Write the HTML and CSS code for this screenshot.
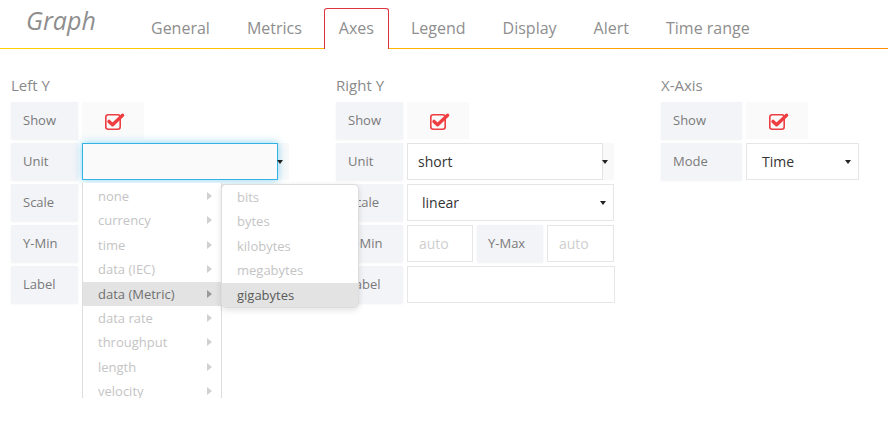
FILE: index.html
```html
<!DOCTYPE html>
<html>
<head>
<meta charset="utf-8">
<link rel="stylesheet" href="styles.css">
</head>
<body>
<div class="header">
  <div class="title">Graph</div>
  <div class="tabs">
    <div class="tab">General</div>
    <div class="tab">Metrics</div>
    <div class="tab active">Axes</div>
    <div class="tab">Legend</div>
    <div class="tab">Display</div>
    <div class="tab">Alert</div>
    <div class="tab">Time range</div>
  </div>
</div>

<div class="panels">
  <div class="sec">
    <div class="sec-title">Left Y</div>
    <div class="rows">
      <div class="row">
        <div class="lbl">Show</div>
        <div class="chk"><svg width="24" height="24" viewBox="0 0 24 24"><rect x="2.8" y="5.8" width="14.4" height="14.4" rx="2.5" fill="none" stroke="#ef3e42" stroke-width="1.6"/><path d="M6 12.4 L9.6 15.8 L19.6 6.2" fill="none" stroke="#ef3e42" stroke-width="3.4" stroke-linecap="round" stroke-linejoin="round"/></svg></div>
      </div>
      <div class="row">
        <div class="lbl">Unit</div>
        <div class="unit-wrap">
          <div class="unit-input focus"></div>
          <span class="caret unit-caret"></span>
          <div class="menu">
            <ul class="list">
              <li>none<span class="arr"></span></li>
              <li>currency<span class="arr"></span></li>
              <li>time<span class="arr"></span></li>
              <li>data (IEC)<span class="arr"></span></li>
              <li class="on">data (Metric)<span class="arr"></span></li>
              <li>data rate<span class="arr"></span></li>
              <li>throughput<span class="arr"></span></li>
              <li>length<span class="arr"></span></li>
              <li>velocity<span class="arr"></span></li>
            </ul>
            <ul class="sub">
              <li>bits</li>
              <li>bytes</li>
              <li>kilobytes</li>
              <li>megabytes</li>
              <li class="on">gigabytes</li>
            </ul>
          </div>
        </div>
      </div>
      <div class="row">
        <div class="lbl">Scale</div>
        <div class="select">linear<span class="caret sel-caret"></span></div>
      </div>
      <div class="row">
        <div class="lbl">Y-Min</div>
        <div class="inp small ph">auto</div>
        <div class="lbl">Y-Max</div>
        <div class="inp small2 ph">auto</div>
      </div>
      <div class="row">
        <div class="lbl">Label</div>
        <div class="inp full"></div>
      </div>
    </div>
  </div>

  <div class="sec">
    <div class="sec-title">Right Y</div>
    <div class="rows">
      <div class="row">
        <div class="lbl">Show</div>
        <div class="chk"><svg width="24" height="24" viewBox="0 0 24 24"><rect x="2.8" y="5.8" width="14.4" height="14.4" rx="2.5" fill="none" stroke="#ef3e42" stroke-width="1.6"/><path d="M6 12.4 L9.6 15.8 L19.6 6.2" fill="none" stroke="#ef3e42" stroke-width="3.4" stroke-linecap="round" stroke-linejoin="round"/></svg></div>
      </div>
      <div class="row">
        <div class="lbl">Unit</div>
        <div class="unit-wrap">
          <div class="unit-input">short</div>
          <span class="caret unit-caret"></span>
        </div>
      </div>
      <div class="row">
        <div class="lbl">Scale</div>
        <div class="select">linear<span class="caret sel-caret"></span></div>
      </div>
      <div class="row">
        <div class="lbl">Y-Min</div>
        <div class="inp small ph">auto</div>
        <div class="lbl">Y-Max</div>
        <div class="inp small2 ph">auto</div>
      </div>
      <div class="row">
        <div class="lbl">Label</div>
        <div class="inp full"></div>
      </div>
    </div>
  </div>

  <div class="sec">
    <div class="sec-title">X-Axis</div>
    <div class="rows">
      <div class="row">
        <div class="lbl wide">Show</div>
        <div class="chk"><svg width="24" height="24" viewBox="0 0 24 24"><rect x="2.8" y="5.8" width="14.4" height="14.4" rx="2.5" fill="none" stroke="#ef3e42" stroke-width="1.6"/><path d="M6 12.4 L9.6 15.8 L19.6 6.2" fill="none" stroke="#ef3e42" stroke-width="3.4" stroke-linecap="round" stroke-linejoin="round"/></svg></div>
      </div>
      <div class="row">
        <div class="lbl wide">Mode</div>
        <div class="select mode">Time<span class="caret sel-caret"></span></div>
      </div>
    </div>
  </div>
</div>
</body>
</html>
```

FILE: styles.css
```css
* { box-sizing: border-box; }
html { height: 100%; }
body {
  margin: 0;
  min-height: 427px;
  font-family: "Open Sans", "Noto Sans", sans-serif;
  background: #fff;
  color: #333;
}
.header {
  display: flex;
  align-items: flex-end;
  height: 49px;
  border-bottom: 1px solid #ffc400;
  border-image: linear-gradient(90deg, #ffd200, #ffb000 50%, #ff8e00) 1;
}
.title {
  align-self: flex-start;
  margin-top: 8px;
  margin-left: 26px;
  width: 110px;
  font-size: 25px;
  line-height: 25px;
  font-style: italic;
  color: #8e8e8e;
}
.tabs {
  display: flex;
  gap: 7px;
}
.tab {
  height: 41px;
  margin-bottom: -1px;
  padding: 0 14px;
  border: 1px solid transparent;
  border-bottom: none;
  border-radius: 3px 3px 0 0;
  font-size: 16px;
  line-height: 38px;
  color: #8e8e8e;
}
.tab.active {
  border-color: #dc3540;
  background: #fff;
}
.panels {
  display: grid;
  grid-template-columns: 325px 325px 1fr;
  padding: 26px 0 0 11px;
}
.sec-title {
  font-size: 15px;
  line-height: 20px;
  color: #8a8a8a;
  margin-bottom: 7px;
}
.rows {
  display: flex;
  flex-direction: column;
  gap: 4px;
}
.row {
  display: flex;
  gap: 4px;
  height: 37px;
}
.lbl {
  width: 67px;
  flex: none;
  padding-left: 12px;
  background: #f3f4f8;
  box-shadow: 0 1px 2px rgba(0,0,0,0.06);
  font-size: 13px;
  line-height: 37px;
  color: #7a7a7a;
}
.lbl.wide { width: 81px; }
.chk {
  width: 62px;
  background: #fafafa;
  display: flex;
  align-items: center;
  justify-content: center;
  padding-left: 4px;
}
.unit-wrap {
  position: relative;
  width: 207px;
  background: #f9f9f9;
}
.unit-input {
  width: 196px;
  height: 37px;
  border: 1px solid #e4e4e4;
  background: #fff;
  padding-left: 10px;
  font-size: 14px;
  line-height: 35px;
  color: #333;
}
.unit-input.focus {
  border-color: #35b2e4;
  background: #fafafa;
  box-shadow: 0 0 8px rgba(82, 190, 236, 0.7);
}
.caret {
  position: absolute;
  width: 0;
  height: 0;
  border-left: 3.5px solid transparent;
  border-right: 3.5px solid transparent;
  border-top: 4px solid #222;
}
.unit-caret { left: 195px; top: 17px; }
.select {
  position: relative;
  width: 207px;
  border: 1px solid #e6e6e6;
  background: #fff;
  padding-left: 14px;
  font-size: 14px;
  line-height: 35px;
  color: #333;
}
.select.mode { width: 113px; padding-left: 15px; }
.sel-caret { right: 7px; top: 16px; }
.inp {
  border: 1px solid #e6e6e6;
  background: #fff;
  padding-left: 11px;
  font-size: 14px;
  line-height: 35px;
}
.inp.ph { color: #cfcfcf; }
.inp.small { width: 66px; }
.inp.small2 { width: 67px; }
.row .inp.small + .lbl { width: 66px; padding-left: 11px; }
.inp.full { width: 208px; }

.menu {
  position: absolute;
  top: 40px;
  left: 0;
  z-index: 10;
}
.list, .sub {
  list-style: none;
  margin: 0;
  padding: 0;
  background: #fff;
  font-size: 13px;
}
.list {
  width: 140px;
  height: 215px;
  overflow: hidden;
  border-left: 1px solid #ddd;
  border-right: 1px solid #ddd;
  padding-top: 1px;
}
.list li, .sub li {
  position: relative;
  height: 24.4px;
  line-height: 24.4px;
  padding-left: 15px;
  color: #c4c4c4;
  white-space: nowrap;
}
.list li.on, .sub li.on {
  background: #e3e3e3;
  color: #707070;
}
.sub li.on { color: #5a5a5a; }
.arr {
  position: absolute;
  right: 9px;
  top: 8px;
  width: 0;
  height: 0;
  border-left: 5px solid #d0d0d0;
  border-top: 4.5px solid transparent;
  border-bottom: 4.5px solid transparent;
}
.list li.on .arr { border-left-color: #9a9a9a; }
.sub {
  position: absolute;
  left: 139px;
  top: 1px;
  width: 138px;
  border: 1px solid #dcdcdc;
  border-radius: 5px;
  overflow: hidden;
  box-shadow: 0 2px 6px rgba(0,0,0,0.12);
}
```
